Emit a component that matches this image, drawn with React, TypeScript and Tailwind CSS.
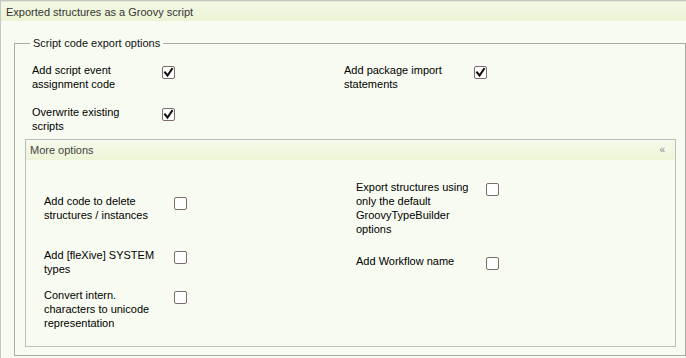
const FONT = "font-['Liberation_Sans',Arial,Helvetica,sans-serif]"

type Option = {
  label: string
  checked: boolean
}

const MAIN_OPTIONS: (Option | null)[] = [
  { label: 'Add script event assignment code', checked: true },
  { label: 'Add package import statements', checked: true },
  { label: 'Overwrite existing scripts', checked: true },
  null,
]

const MORE_OPTIONS: Option[] = [
  { label: 'Add code to delete structures / instances', checked: false },
  { label: 'Export structures using only the default GroovyTypeBuilder options', checked: false },
  { label: 'Add [fleXive] SYSTEM types', checked: false },
  { label: 'Add Workflow name', checked: false },
  { label: 'Convert intern. characters to unicode representation', checked: false },
]

function Checkbox({ checked }: { checked: boolean }) {
  return (
    <span className="mt-[3px] flex h-[13px] w-[13px] shrink-0 items-center justify-center rounded-[2px] border border-[#7c6d6d] bg-white">
      {checked ? (
        <svg width="11" height="11" viewBox="0 0 11 11" aria-hidden>
          <path d="M2 5.5 L4.5 8.5 L9 2" fill="none" stroke="#111" strokeWidth="2" strokeLinecap="square" />
        </svg>
      ) : null}
    </span>
  )
}

function OptionItem({ option }: { option: Option }) {
  return (
    <label className="flex items-start">
      <span className="w-[130px] pr-[12px]">{option.label}</span>
      <Checkbox checked={option.checked} />
    </label>
  )
}

export default function App() {
  return (
    <div
      className={`${FONT} h-[358px] w-[686px] overflow-hidden border-l border-t border-[#c6c6c6] bg-[#f8fbf1] text-[11px] leading-[14px] text-black`}
    >
      <div className="flex h-[20px] items-center border-t border-[#e3ead2] bg-gradient-to-b from-[#f2f8e4] to-[#ecf4d5] pl-[5px] text-[#333]">
        Exported structures as a Groovy script
      </div>

      <fieldset className="ml-[13px] mt-[15px] w-[672px] border border-[#ababab]">
        <legend className="ml-[15px] px-[3px] text-[#111]">Script code export options</legend>

        <div className="grid grid-cols-[312px_1fr] gap-y-[14px] pl-[17px] pt-[13px]">
          {MAIN_OPTIONS.map((option, index) =>
            option ? <OptionItem key={option.label} option={option} /> : <div key={index} />,
          )}
        </div>

        <div className="mb-[8px] ml-[10px] mr-[9px] mt-[6px] border border-[#bdbdbd]">
          <div className="flex h-[20px] items-center justify-between bg-gradient-to-b from-[#f6faeb] to-[#edf5d7] pl-[4px] pr-[10px] text-[#444]">
            <span>More options</span>
            <span className="text-[10px] text-[#888]">«</span>
          </div>
          <div className="grid grid-cols-[312px_1fr] items-center gap-y-[12px] pb-[16px] pl-[18px] pt-[20px]">
            {MORE_OPTIONS.map((option) => (
              <OptionItem key={option.label} option={option} />
            ))}
          </div>
        </div>
      </fieldset>
    </div>
  )
}
